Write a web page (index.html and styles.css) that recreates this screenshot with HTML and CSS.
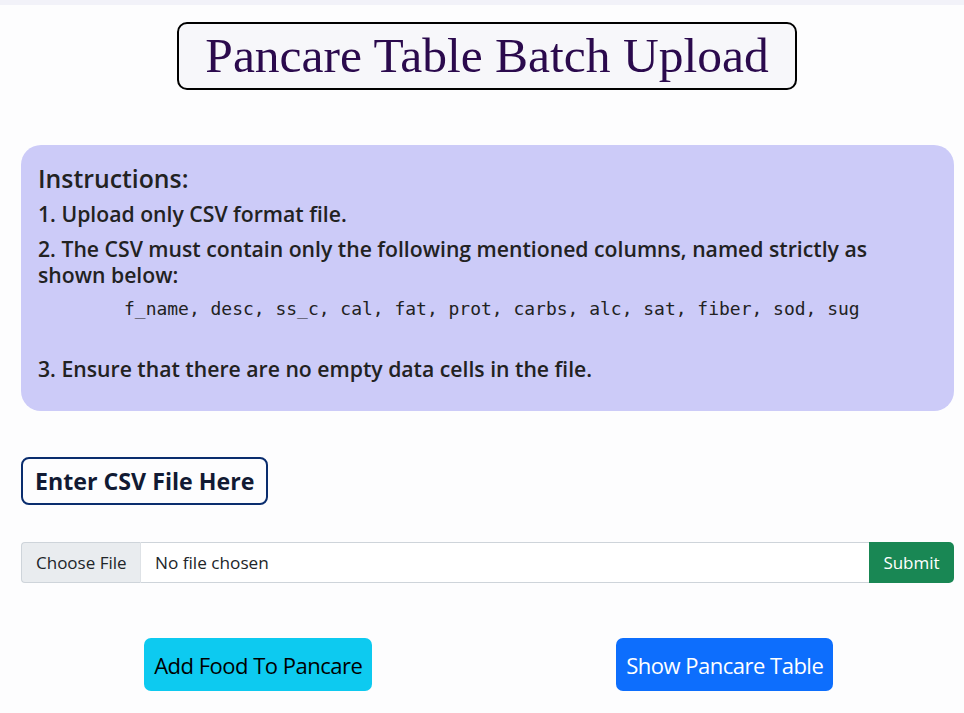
FILE: index.html
```html
<!DOCTYPE html>
<html lang="en">
<head>
<meta charset="utf-8">
<title>Pancare Table Batch Upload</title>
<link rel="stylesheet" href="styles.css">
</head>
<body>
<div class="topbar"></div>
<header class="title-wrap">
  <h1 class="title">Pancare Table Batch Upload</h1>
</header>
<main class="page">
  <section class="card">
    <h4 class="card-head">Instructions:</h4>
    <p class="step">1. Upload only CSV format file.</p>
    <p class="step">2. The CSV must contain only the following mentioned columns, named strictly as shown below:</p>
    <p class="cols">f_name, desc, ss_c, cal, fat, prot, carbs, alc, sat, fiber, sod, sug</p>
    <p class="step step-last">3. Ensure that there are no empty data cells in the file.</p>
  </section>
  <div class="label-row"><span class="label-box">Enter CSV File Here</span></div>
  <form class="upload">
    <label class="file-btn">Choose File</label>
    <span class="file-name">No file chosen</span>
    <button type="button" class="submit">Submit</button>
  </form>
  <div class="actions">
    <div class="action-col"><button type="button" class="btn btn-info">Add Food To Pancare</button></div>
    <div class="action-col"><button type="button" class="btn btn-primary">Show Pancare Table</button></div>
  </div>
</main>
</body>
</html>
```
FILE: styles.css
```css
html, body {
  margin: 0;
  padding: 0;
}
body {
  background: #fdfdfe;
  font-family: "Open Sans", "Noto Sans", sans-serif;
  color: #212529;
  height: 713px;
  overflow: hidden;
}
.topbar {
  height: 5px;
  background: #f2f2f9;
}
.title-wrap {
  display: flex;
  justify-content: center;
  padding-top: 17px;
  padding-left: 10px;
}
.title {
  margin: 0;
  box-sizing: border-box;
  width: 620px;
  height: 68px;
  display: flex;
  align-items: center;
  justify-content: center;
  border: 2px solid #000;
  border-radius: 10px;
  background: #f7f7fa;
  font-family: "Liberation Serif", "DejaVu Serif", serif;
  font-weight: 400;
  font-size: 49.5px;
  color: #2b0a4d;
  padding-bottom: 1px;
}
.page {
  padding: 0 10px 0 21px;
}
.card {
  margin-top: 55px;
  background: #cccbf8;
  border-radius: 20px;
  height: 266px;
  box-sizing: border-box;
  padding: 17px 17px 0 17px;
}
.card-head {
  margin: 0 0 7px 0;
  font-size: 24.8px;
  font-weight: 600;
  line-height: 32px;
  color: #222;
}
.step {
  margin: 0 0 9px 0;
  font-size: 21.2px;
  font-weight: 600;
  line-height: 26px;
  color: #222;
}
.cols {
  margin: 3px 0 35px 86px;
  font-family: "DejaVu Sans Mono", "Liberation Mono", monospace;
  font-size: 17.98px;
  line-height: 24px;
  color: #222;
}
.step-last {
  margin: 0;
}
.label-row {
  margin-top: 46px;
}
.label-box {
  display: inline-flex;
  align-items: center;
  box-sizing: border-box;
  height: 48px;
  padding: 0 12px;
  border: 2px solid #0a2d6e;
  border-radius: 8px;
  font-size: 23.2px;
  font-weight: 700;
  color: #111a33;
}
.upload {
  margin: 37px 0 0 0;
  display: flex;
  height: 41px;
  box-sizing: border-box;
}
.file-btn {
  display: flex;
  align-items: center;
  box-sizing: border-box;
  width: 120px;
  padding-left: 14px;
  background: #e9ecef;
  border: 1px solid #ced4da;
  border-right-color: #dee2e6;
  border-radius: 4px 0 0 4px;
  font-size: 17px;
  color: #212529;
}
.file-name {
  flex: 1;
  display: flex;
  align-items: center;
  padding-left: 14px;
  background: #fff;
  border-top: 1px solid #ced4da;
  border-bottom: 1px solid #ced4da;
  font-size: 17.2px;
  color: #212529;
}
.submit {
  width: 85px;
  border: 0;
  background: #198754;
  color: #fff;
  font-family: "Open Sans", "Noto Sans", sans-serif;
  font-size: 17px;
  border-radius: 0 5px 5px 0;
  padding: 0;
}
.actions {
  margin: 55px -4px 0 4px;
  display: grid;
  grid-template-columns: 1fr 1fr;
}
.action-col {
  display: flex;
  justify-content: center;
}
.btn {
  height: 53px;
  border: 0;
  border-radius: 7px;
  padding: 0 10px;
  font-family: "Open Sans", "Noto Sans", sans-serif;
  font-size: 22px;
  letter-spacing: -0.5px;
}
.btn-info {
  background: #0dcaf0;
  color: #000;
}
.btn-primary {
  background: #0d6efd;
  color: #fff;
}
```
